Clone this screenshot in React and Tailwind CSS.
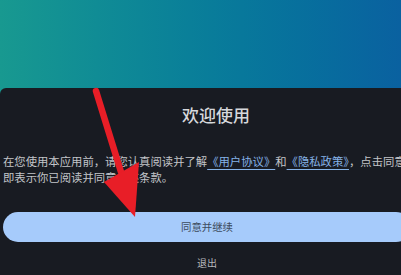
const cjk = { fontFamily: '"Noto Sans CJK SC", "Noto Sans", sans-serif' };

export default function App() {
  return (
    <div
      className="relative w-[401px] h-[275px] overflow-hidden bg-gradient-to-r from-[#189990] to-[#0a61a0]"
      style={cjk}
    >
      <div className="h-[88px]" />
      <div className="w-[414px] h-[187px] rounded-tl-[6px] bg-[#181b22] px-[3px]">
        <h1 className="pt-[15px] pl-[18px] text-center text-[17px] leading-[24px] font-medium text-[#d6d8dc]">
          欢迎使用
        </h1>
        <p className="mt-[27px] text-[11.35px] leading-[15.5px] text-[#c3c5c9]">
          在您使用本应用前，请您认真阅读并了解
          <span className="text-[#86b3e8] underline underline-offset-[3px]">《用户协议》</span>和
          <span className="text-[#86b3e8] underline underline-offset-[3px]">《隐私政策》</span>
          ，点击同意即表示你已阅读并同意上述条款。
        </p>
        <button className="mt-[27px] w-full h-[30px] rounded-full bg-[#a6cbfb] text-[10.4px] text-[#3d4b5e]">
          同意并继续
        </button>
        <div className="mt-[14px] text-center text-[10px] leading-[14px] text-[#b5b7bb]">退出</div>
      </div>
      <svg className="absolute left-0 top-0" width="401" height="275" viewBox="0 0 401 275">
        <line x1="96" y1="91" x2="121" y2="172" stroke="#e81e27" strokeWidth="6.5" strokeLinecap="round" />
        <polygon points="104,182 139,162 135,217" fill="#e81e27" />
      </svg>
    </div>
  );
}
